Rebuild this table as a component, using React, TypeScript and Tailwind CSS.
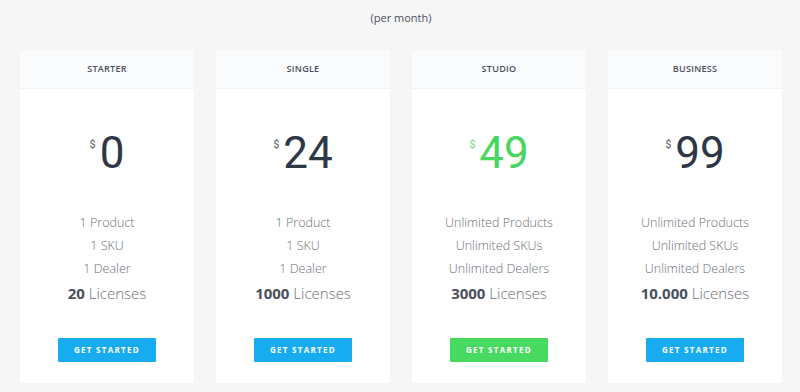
const plans = [
  {
    name: "STARTER",
    price: "0",
    features: ["1 Product", "1 SKU", "1 Dealer"],
    licenses: "20",
    featured: false,
  },
  {
    name: "SINGLE",
    price: "24",
    features: ["1 Product", "1 SKU", "1 Dealer"],
    licenses: "1000",
    featured: false,
  },
  {
    name: "STUDIO",
    price: "49",
    features: ["Unlimited Products", "Unlimited SKUs", "Unlimited Dealers"],
    licenses: "3000",
    featured: true,
  },
  {
    name: "BUSINESS",
    price: "99",
    features: ["Unlimited Products", "Unlimited SKUs", "Unlimited Dealers"],
    licenses: "10.000",
    featured: false,
  },
];

type Plan = (typeof plans)[number];

const PlanCard = ({ plan }: { plan: Plan }) => {
  return (
    <section className="flex flex-col rounded-[2px] bg-white shadow-[0_0_2px_rgba(0,0,0,0.04)]">
      <div className="flex h-[39px] items-center justify-center border-b border-[#f0f1f3] bg-[#fafbfc] text-[9px] font-semibold tracking-[0.03em] text-[#4a505c]">
        {plan.name}
      </div>
      <div className="flex flex-col items-center pb-[21px] pt-[42px]">
        <div
          className={
            plan.featured
              ? "flex items-start text-[#48d561]"
              : "flex items-start text-[#2f3746]"
          }
        >
          <span className="mr-[4px] mt-[8px] text-[11px] leading-none opacity-80 [font-family:Roboto,sans-serif]">
            $
          </span>
          <span className="text-[44px] font-normal leading-[44px] [font-family:Roboto,sans-serif]">
            {plan.price}
          </span>
        </div>
        <ul className="mt-[36px] flex flex-col items-center text-[12.5px] font-light leading-[23px] text-[#6b7079]">
          {plan.features.map((f) => (
            <li key={f}>{f}</li>
          ))}
          <li className="text-[15px] leading-[26px]">
            <span className="font-bold text-[#4a505c]">{plan.licenses}</span>{" "}
            Licenses
          </li>
        </ul>
        <button
          className={
            plan.featured
              ? "mt-[32px] h-[24px] w-[98px] rounded-[1px] bg-[#48d961] text-[8px] font-bold tracking-[0.16em] text-white"
              : "mt-[32px] h-[24px] w-[98px] rounded-[1px] bg-[#17acf0] text-[8px] font-bold tracking-[0.16em] text-white"
          }
        >
          GET STARTED
        </button>
      </div>
    </section>
  );
};

export default function App() {
  return (
    <div className="min-h-[392px] w-[800px] bg-[#f6f6f6] pl-[20px] pr-[18px] [font-family:'Open_Sans',sans-serif]">
      <p className="pt-[10px] text-center text-[11px] leading-[15px] text-[#4a505c]">
        (per month)
      </p>
      <div className="mt-[25px] grid grid-cols-4 gap-[22px]">
        {plans.map((p) => (
          <PlanCard key={p.name} plan={p} />
        ))}
      </div>
    </div>
  );
}
